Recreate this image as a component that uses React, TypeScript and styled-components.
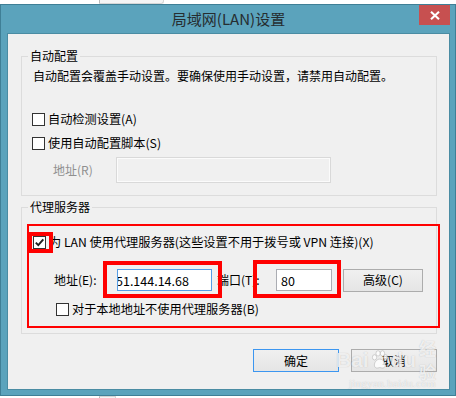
import React from 'react';
import styled, { createGlobalStyle } from 'styled-components';

const GlobalStyle = createGlobalStyle`
  html, body {
    margin: 0;
    padding: 0;
    background: #ffffff;
  }
  body {
    width: 456px;
    height: 398px;
    overflow: hidden;
    font-family: "Noto Sans CJK SC", "Noto Sans", sans-serif;
    font-size: 12px;
    color: #000;
  }
`;

const Page = styled.div`
  display: flex;
  flex-direction: column;
  width: 456px;
  height: 398px;
`;

// bits of the window that sits behind the dialog
const BehindStrip = styled.div<{ $h: number }>`
  height: ${({ $h }) => $h}px;
  display: flex;
  flex: none;
`;

const BehindPiece = styled.div<{ $top?: boolean }>`
  margin-left: 99px;
  width: ${({ $top }) => ($top ? 65 : 17)}px;
  box-sizing: border-box;
  border-left: 1px solid #b9b9b9;
  border-right: 1px solid #d6d6d6;
  ${({ $top }) => ($top ? 'border-bottom: 1px solid #d6d6d6; border-bottom-right-radius: 3px;' : 'border-top: 1px solid #d6d6d6;')}
  background: #f4f4f4;
`;

const Window = styled.div`
  position: relative;
  height: 392px;
  flex: none;
  box-sizing: border-box;
  display: flex;
  flex-direction: column;
  padding: 0 7px 7px 8px;
  background: #5ba3bc;
  box-shadow: inset 0 0 0 1px #3f7f96;
`;

const TitleBar = styled.div`
  height: 30px;
  display: flex;
  align-items: center;
  justify-content: center;
`;

const Title = styled.div`
  font-size: 15px;
  line-height: 18px;
  color: #262d30;
`;

const CloseButton = styled.div`
  position: absolute;
  top: 1px;
  right: 6px;
  width: 31px;
  height: 20px;
  background: #c75050;
  display: flex;
  align-items: center;
  justify-content: center;
`;

const Client = styled.div`
  position: relative;
  flex: 1;
  background: #f0f0f0;
  box-shadow: 0 0 0 1px #4a8ca3;
  padding: 14px 12px 0 13px;
  display: flex;
  flex-direction: column;
`;

const Group = styled.fieldset<{ $gap?: number }>`
  margin: ${({ $gap }) => $gap ?? 0}px 0 0 0;
  padding: 0;
  border: 1px solid #dcdcdc;
  min-width: 0;
`;

const Legend = styled.legend`
  margin-left: 6px;
  padding: 0 2px;
  line-height: 16px;
  font-size: 12px;
`;

const GroupBody = styled.div<{ $pb: number }>`
  display: flex;
  flex-direction: column;
  padding: 0 0 ${({ $pb }) => $pb}px 10px;
`;

const Description = styled.div`
  margin: 4px 0 0 1px;
  line-height: 16px;
  white-space: nowrap;
`;

const Row = styled.div<{ $mt: number; $ml?: number; $h?: number }>`
  display: flex;
  align-items: center;
  margin-top: ${({ $mt }) => $mt}px;
  margin-left: ${({ $ml }) => $ml ?? 0}px;
  height: ${({ $h }) => $h ?? 16}px;
  white-space: nowrap;
`;

const Box = styled.span`
  width: 13px;
  height: 13px;
  box-sizing: border-box;
  border: 1px solid #333;
  background: #fff;
  margin-right: 3px;
  display: flex;
  align-items: center;
  justify-content: center;
  flex: none;
`;

const CheckText = styled.span`
  line-height: 16px;
  font-size: 12.2px;
`;

const FieldLabel = styled.span<{ $w: number; $ml?: number; $disabled?: boolean }>`
  width: ${({ $w }) => $w}px;
  margin-left: ${({ $ml }) => $ml ?? 0}px;
  color: ${({ $disabled }) => ($disabled ? '#8f8f8f' : '#000')};
  line-height: 16px;
  flex: none;
`;

const Field = styled.div<{ $w: number; $h: number; $tone: 'disabled' | 'focus' | 'normal' }>`
  width: ${({ $w }) => $w}px;
  height: ${({ $h }) => $h}px;
  box-sizing: border-box;
  overflow: hidden;
  display: flex;
  align-items: center;
  padding-left: 3px;
  flex: none;
  font-size: 12.5px;
  border: 1px solid
    ${({ $tone }) => ($tone === 'focus' ? '#569de5' : $tone === 'normal' ? '#abadb3' : '#d9d9d9')};
  background: ${({ $tone }) => ($tone === 'disabled' ? '#f0f0f0' : '#fff')};
  box-shadow: ${({ $tone }) => ($tone === 'disabled' ? 'inset 0 0 0 1px #fbfbfb' : 'none')};
`;

const FieldValue = styled.span<{ $shift?: number }>`
  margin-left: ${({ $shift }) => $shift ?? 0}px;
  white-space: nowrap;
`;

const RedFrame = styled.div`
  margin: 9px -4px 5px 5px;
  border: 2px solid #ff0000;
  padding: 8px 0 9px 4px;
  display: flex;
  flex-direction: column;
`;

const Button = styled.div<{ $w: number; $h: number; $default?: boolean; $ml?: number }>`
  width: ${({ $w }) => $w}px;
  height: ${({ $h }) => $h}px;
  margin-left: ${({ $ml }) => $ml ?? 0}px;
  box-sizing: border-box;
  border: 1px solid ${({ $default }) => ($default ? '#3c96f0' : '#acacac')};
  background: linear-gradient(#f0f0f0, #e5e5e5);
  display: flex;
  align-items: center;
  justify-content: center;
  flex: none;
  line-height: 16px;
`;

const ButtonRow = styled.div`
  display: flex;
  justify-content: flex-end;
  gap: 12px;
  margin: 15px 0 0 0;
`;

// red annotation rectangles drawn over the dialog
const Highlight = styled.div<{ $x: number; $y: number; $w: number; $h: number }>`
  position: absolute;
  left: ${({ $x }) => $x}px;
  top: ${({ $y }) => $y}px;
  width: ${({ $w }) => $w}px;
  height: ${({ $h }) => $h}px;
  box-sizing: border-box;
  border: 4px solid #ff0000;
  pointer-events: none;
`;

const Watermark = styled.div`
  position: absolute;
  left: 328px;
  top: 314px;
  display: flex;
  flex-direction: column;
  align-items: center;
  color: rgba(255, 255, 255, 0.75);
  text-shadow: 0 0 1px rgba(120, 120, 120, 0.45);
  pointer-events: none;
`;

const MarkLogo = styled.div`
  display: flex;
  align-items: center;
  height: 24px;
  font-family: "Liberation Sans", Arial, sans-serif;
  font-weight: bold;
  font-size: 21px;
  line-height: 24px;
  gap: 1px;
`;

const MarkCn = styled.span`
  font-family: "Noto Sans CJK SC", sans-serif;
  font-size: 17px;
  line-height: 24px;
  font-weight: bold;
  margin-left: 2px;
`;

const MarkUrl = styled.div`
  font-family: "Liberation Serif", serif;
  font-size: 11px;
  line-height: 12px;
  margin-top: 5px;
  letter-spacing: 0.3px;
`;

function CheckBox({ checked, label }: { checked?: boolean; label: string }) {
  return (
    <>
      <Box>
        {checked && (
          <svg width="11" height="11" viewBox="0 0 11 11">
            <path d="M1.8 5.6 L4.3 8.2 L9.3 2.4" fill="none" stroke="#1e1e1e" strokeWidth="1.9" />
          </svg>
        )}
      </Box>
      <CheckText>{label}</CheckText>
    </>
  );
}

function PawIcon() {
  return (
    <svg width="20" height="22" viewBox="0 0 20 22" style={{ margin: '0 1px' }}>
      <g fill="rgba(255,255,255,0.8)" stroke="rgba(130,130,130,0.45)" strokeWidth="0.8">
        <ellipse cx="4" cy="8" rx="2.4" ry="3" />
        <ellipse cx="8" cy="3.5" rx="2.4" ry="3" />
        <ellipse cx="13" cy="3.5" rx="2.4" ry="3" />
        <ellipse cx="16.5" cy="8" rx="2.4" ry="3" />
        <path d="M10 10 C6 10 3 15 4 18 C5 21 8 20 10 19.5 C12 20 15 21 16 18 C17 15 14 10 10 10 Z" />
      </g>
    </svg>
  );
}

export default function App() {
  return (
    <Page>
      <GlobalStyle />
      <BehindStrip $h={4}>
        <BehindPiece $top />
      </BehindStrip>
      <Window>
        <TitleBar>
          <Title>局域网(LAN)设置</Title>
        </TitleBar>
        <CloseButton>
          <svg width="10" height="9" viewBox="0 0 10 9">
            <path d="M1 0.8 L9 8.2 M9 0.8 L1 8.2" stroke="#fff" strokeWidth="2.1" />
          </svg>
        </CloseButton>
        <Client>
          <Group>
            <Legend>自动配置</Legend>
            <GroupBody $pb={12}>
              <Description>自动配置会覆盖手动设置。要确保使用手动设置，请禁用自动配置。</Description>
              <Row $mt={27}>
                <CheckBox label="自动检测设置(A)" />
              </Row>
              <Row $mt={8}>
                <CheckBox label="使用自动配置脚本(S)" />
              </Row>
              <Row $mt={6} $h={26}>
                <FieldLabel $w={63} $ml={21} $disabled>
                  地址(R)
                </FieldLabel>
                <Field $w={215} $h={26} $tone="disabled" />
              </Row>
            </GroupBody>
          </Group>

          <Group $gap={3}>
            <Legend>代理服务器</Legend>
            <RedFrame>
              <Row $mt={0}>
                <CheckBox checked label="为 LAN 使用代理服务器(这些设置不用于拨号或 VPN 连接)(X)" />
              </Row>
              <Row $mt={18} $h={24}>
                <FieldLabel $w={63} $ml={21}>
                  地址(E):
                </FieldLabel>
                <Field $w={95} $h={22} $tone="focus">
                  <FieldValue $shift={-5}>51.144.14.68</FieldValue>
                </Field>
                <FieldLabel $w={59} $ml={5}>
                  端口(T):
                </FieldLabel>
                <Field $w={56} $h={22} $tone="normal">
                  <FieldValue $shift={1}>80</FieldValue>
                </Field>
                <Button $w={80} $h={23} $ml={11}>
                  高级(C)
                </Button>
              </Row>
              <Row $mt={9} $ml={23}>
                <CheckBox label="对于本地地址不使用代理服务器(B)" />
              </Row>
            </RedFrame>
          </Group>

          <ButtonRow>
            <Button $w={86} $h={23} $default>
              确定
            </Button>
            <Button $w={86} $h={23}>
              取消
            </Button>
          </ButtonRow>

          <Highlight $x={20} $y={198} $w={25} $h={21} />
          <Highlight $x={95} $y={227} $w={119} $h={37} />
          <Highlight $x={245} $y={226} $w={88} $h={38} />

          <Watermark>
            <MarkLogo>
              <span>Bai</span>
              <PawIcon />
              <span>du</span>
              <MarkCn>经验</MarkCn>
            </MarkLogo>
            <MarkUrl>jingyan.baidu.com</MarkUrl>
          </Watermark>
        </Client>
      </Window>
      <BehindStrip $h={2}>
        <BehindPiece />
      </BehindStrip>
    </Page>
  );
}
